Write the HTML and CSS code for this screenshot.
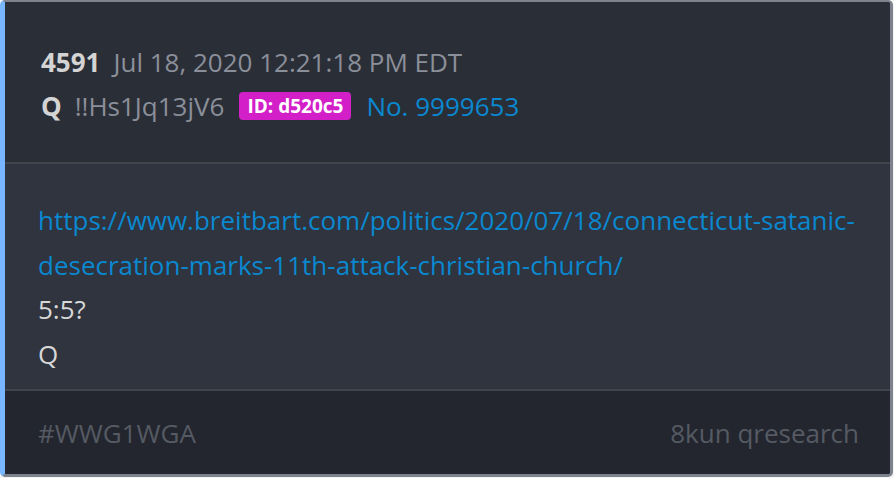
FILE: index.html
```html
<!DOCTYPE html>
<html>
<head>
<meta charset="utf-8">
<link rel="stylesheet" href="styles.css">
</head>
<body>
<div class="card">
  <div class="head">
    <div class="line"><span class="num">4591</span><span class="date">Jul 18, 2020 12:21:18 PM EDT</span></div>
    <div class="line"><span class="num">Q</span><span class="trip">!!Hs1Jq13jV6</span><span class="badge">ID: d520c5</span><span class="no">No. 9999653</span></div>
  </div>
  <div class="body">
    <div class="link">https://www.breitbart.com/politics/2020/07/18/connecticut-satanic-desecration-marks-11th-attack-christian-church/</div>
    <div class="text">5:5?</div>
    <div class="text">Q</div>
  </div>
  <div class="foot">
    <span>#WWG1WGA</span>
    <span>8kun qresearch</span>
  </div>
</div>
</body>
</html>
```
FILE: styles.css
```css
html, body { margin: 0; padding: 0; background: #f4f4f4; }
body { font-family: "Open Sans", "Noto Sans", sans-serif; font-size: 26px; }
.card {
  width: 893px;
  height: 477px;
  box-sizing: border-box;
  border: 1px solid #7d828c;
  border-top-width: 2px;
  border-right-width: 3px;
  border-bottom-width: 3px;
  border-left: 5px solid #78b6ff;
  border-radius: 5px;
  overflow: hidden;
  display: flex;
  flex-direction: column;
  background: #2f343e;
}
.head {
  background: #2a2e37;
  padding: 38px 36px 0;
  border-bottom: 2px solid #40444d;
  height: 162px;
  box-sizing: border-box;
}
.line { line-height: 44px; display: flex; align-items: center; white-space: nowrap; }
.num { font-weight: 700; color: #d4d4d4; margin-right: 13px; }
.date, .trip { color: #8b8f99; }
.trip { margin-right: 15px; }
.badge {
  background: #d21fc8;
  color: #fff;
  font-weight: 700;
  font-size: 19px;
  line-height: 28px;
  padding: 0 8px;
  border-radius: 4px;
  margin-right: 15px;
}
.no { color: #0a88d0; }
.body {
  flex: 1;
  padding: 34px 30px 0 33px;
  border-bottom: 2px solid #40444d;
  line-height: 44.6px;
}
.link { color: #0a88d0; }
.text { color: #d8d8d8; }
.foot {
  background: #23262e;
  height: 83px;
  display: flex;
  align-items: center;
  justify-content: space-between;
  padding: 0 31px 0 33px;
  color: #555a63;
}
```
